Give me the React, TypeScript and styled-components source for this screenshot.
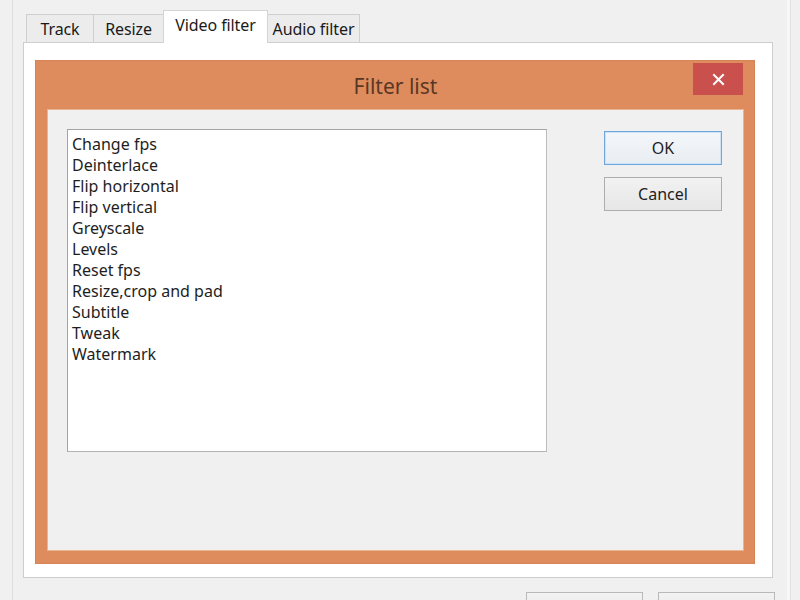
import * as React from "react";
import styled, { createGlobalStyle } from "styled-components";

const GlobalStyle = createGlobalStyle`
  html, body {
    margin: 0;
    padding: 0;
    background: #f0f0f0;
  }
  body {
    font-family: "Noto Sans", "Open Sans", "DejaVu Sans", sans-serif;
    color: #1e1e1e;
  }
`;

const filters = [
  "Change fps",
  "Deinterlace",
  "Flip horizontal",
  "Flip vertical",
  "Greyscale",
  "Levels",
  "Reset fps",
  "Resize,crop and pad",
  "Subtitle",
  "Tweak",
  "Watermark",
];

const tabs = [
  { label: "Track", width: 68 },
  { label: "Resize", width: 71 },
  { label: "Video filter", width: 105 },
  { label: "Audio filter", width: 93 },
];

export default function App() {
  return (
    <>
      <GlobalStyle />
      <Screen>
        <Frame>
          <TabRow>
            {tabs.map((t) => (
              <Tab key={t.label} $w={t.width} $active={t.label === "Video filter"}>
                {t.label}
              </Tab>
            ))}
          </TabRow>
          <Panel>
            <Dialog>
              <TitleBar>
                <Title>Filter list</Title>
                <CloseButton aria-label="Close">
                  <svg width="13" height="13" viewBox="0 0 13 13">
                    <path d="M2 2 L11 11 M11 2 L2 11" stroke="#fff" strokeWidth="2" strokeLinecap="square" />
                  </svg>
                </CloseButton>
              </TitleBar>
              <Client>
                <ListBox>
                  {filters.map((f) => (
                    <ListItem key={f}>{f}</ListItem>
                  ))}
                </ListBox>
                <ButtonColumn>
                  <Button $default>OK</Button>
                  <Button>Cancel</Button>
                </ButtonColumn>
              </Client>
            </Dialog>
          </Panel>
          <Footer>
            <FooterButton />
            <FooterButton />
          </Footer>
        </Frame>
      </Screen>
    </>
  );
}

const Screen = styled.div`
  width: 800px;
  height: 600px;
  overflow: hidden;
  background: #f0f0f0;
`;

const Frame = styled.div`
  margin-left: 12px;
  width: 778px;
  height: 600px;
  box-sizing: border-box;
  border-left: 1px solid #dedede;
  border-right: 3px solid #f7f7f7;
  box-shadow: 1px 0 0 #e2e2e2;
  padding: 10px 0 0 10px;
`;

const TabRow = styled.div`
  display: flex;
  align-items: flex-end;
  height: 33px;
  padding-left: 4px;
  margin-bottom: -1px;
  position: relative;
  z-index: 1;
`;

const Tab = styled.div<{ $w: number; $active?: boolean }>`
  width: ${(p) => p.$w}px;
  height: ${(p) => (p.$active ? 33 : 29)}px;
  box-sizing: border-box;
  margin-left: -1px;
  display: flex;
  align-items: center;
  justify-content: center;
  font-size: 16px;
  letter-spacing: -0.1px;
  color: #1a1a1a;
  border: 1px solid ${(p) => (p.$active ? "#d4d4d4" : "#cfcfcf")};
  border-bottom: ${(p) => (p.$active ? "none" : "1px solid #cfcfcf")};
  background: ${(p) => (p.$active ? "#ffffff" : "#ececec")};
  padding-bottom: ${(p) => (p.$active ? 5 : 0)}px;
  position: relative;
  z-index: ${(p) => (p.$active ? 2 : 1)};
`;

const Panel = styled.div`
  width: 750px;
  height: 536px;
  box-sizing: border-box;
  border: 1px solid #cdcdcd;
  background: #ffffff;
  padding: 18px 18px 14px 12px;
`;

const Dialog = styled.div`
  height: 100%;
  display: flex;
  flex-direction: column;
  background: #de8c5d;
  box-shadow: 0 0 0 1px #d48457;
  padding: 0 11px 13px 12px;
  box-sizing: border-box;
`;

const TitleBar = styled.div`
  height: 49px;
  display: flex;
  align-items: flex-start;
  padding-left: 50px;
`;

const Title = styled.div`
  flex: 1;
  text-align: center;
  line-height: 50px;
  font-size: 21px;
  color: #5a3724;
`;

const CloseButton = styled.div`
  width: 50px;
  height: 32px;
  margin-top: 2px;
  background: #c9504d;
  display: flex;
  align-items: center;
  justify-content: center;
`;

const Client = styled.div`
  flex: 1;
  display: flex;
  align-items: flex-start;
  background: #f0f0f0;
  box-shadow: 0 0 0 1px #eab391;
  padding: 19px;
`;

const ListBox = styled.div`
  width: 480px;
  height: 323px;
  box-sizing: border-box;
  border: 1px solid #a3a3a3;
  border-right-color: #bcbcbc;
  border-bottom-color: #b4b4b4;
  background: #ffffff;
  padding: 4px 4px;
`;

const ListItem = styled.div`
  font-size: 16px;
  line-height: 21px;
  color: #1e1e1e;
  white-space: nowrap;
`;

const ButtonColumn = styled.div`
  display: flex;
  flex-direction: column;
  gap: 12px;
  margin-left: 57px;
  margin-top: 2px;
`;

const Button = styled.div<{ $default?: boolean }>`
  width: 118px;
  height: 34px;
  box-sizing: border-box;
  display: flex;
  align-items: center;
  justify-content: center;
  font-size: 16px;
  color: #1e1e1e;
  border: 1px solid ${(p) => (p.$default ? "#6fa6dc" : "#adadad")};
  box-shadow: ${(p) => (p.$default ? "inset 0 0 0 1px #cfe3f6" : "none")};
  background: ${(p) =>
    p.$default
      ? "linear-gradient(#f4f7fa, #e8edf2)"
      : "linear-gradient(#f2f2f2, #e6e6e6)"};
`;

const Footer = styled.div`
  display: flex;
  justify-content: flex-end;
  gap: 15px;
  margin-top: 14px;
  width: 752px;
`;

const FooterButton = styled.div`
  width: 117px;
  height: 34px;
  box-sizing: border-box;
  border: 1px solid #b9b9b9;
  background: linear-gradient(#f2f2f2, #e6e6e6);
`;
